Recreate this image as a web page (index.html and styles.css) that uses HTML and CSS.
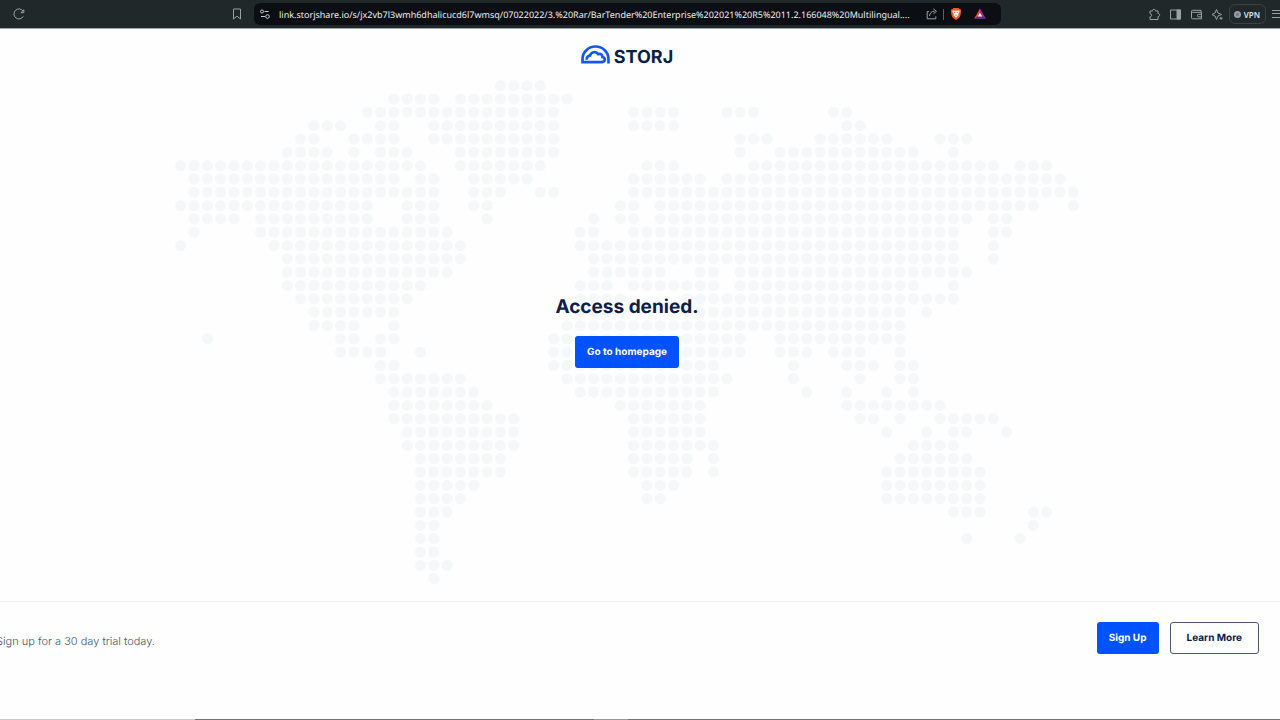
FILE: index.html
```html
<!DOCTYPE html>
<html lang="en">
<head>
<meta charset="utf-8">
<title>Storj - Access denied</title>
<link rel="stylesheet" href="styles.css">
</head>
<body>
<div class="toolbar">
  <div class="tools-left">
    <button class="tool" aria-label="Reload"><svg width="14" height="14" viewBox="0 0 14 14"><path d="M11.3 9.4A5 5 0 1 1 11.2 4.3M11.8 2.8v2.9H8.9z"/></svg></button>
    <button class="tool" aria-label="Bookmark"><svg width="14" height="14" viewBox="0 0 14 14"><path d="M3.5 2h7v10L7 9.2 3.5 12z"/></svg></button>
  </div>
  <div class="address">
    <button class="tool bright" aria-label="Site information"><svg width="12" height="12" viewBox="0 0 12 12"><circle cx="3" cy="3.5" r="1.5"/><circle cx="8.5" cy="8.5" r="1.8"/><path d="M5.5 3.5h4M2 8.5h4"/></svg></button>
    <input class="url" type="text" aria-label="Address" value="link.storjshare.io/s/jx2vb7l3wmh6dhalicucd6l7wmsq/07022022/3.%20Rar/BarTender%20Enterprise%202021%20R5%2011.2.166048%20Multilingual....">
    <button class="tool" aria-label="Share"><svg width="14" height="14" viewBox="0 0 14 14"><path d="M4 4.5H2.2v7.3h8.6V9.3M4.5 9c.3-3 2-4.700 5-4.700M8.300 1.800l3.200 2.500-3.200 2.600"/></svg></button>
    <span class="divider"></span>
    <button class="tool" aria-label="Brave Shields"><svg width="12" height="14" viewBox="0 0 12 14"><path class="shield" d="M3.500 1h5l1 1 1.200.2.500 2-.900 4.500c-.4 1.800-2.100 3-4.300 4.400C3.800 11.700 2.100 10.500 1.700 8.700L.800 4.200l.500-2L2.500 2z"/><path class="face" d="M2.800 3.500l2 .3L6 3.500l1.200.3 2-.3.300 1.500-1.300 2 .2 1.200L6 10.800 3.600 8.200 3.800 7 2.500 5z"/><path class="face-line" d="M3.800 5l1.400.6M8.200 5l-1.400.6M5.200 8L6 8.500 6.800 8"/></svg></button>
    <button class="tool" aria-label="Brave Rewards"><svg width="14" height="12" viewBox="0 0 14 12"><path class="bat-a" d="M7 .5L1 11l6-3.500z"/><path class="bat-b" d="M7 .5L13 11 7 7.500z"/><path class="bat-c" d="M1 11h12L7 7z"/><path class="bat-d" d="M7 4.700L9.200 8.500H4.800z"/></svg></button>
  </div>
  <div class="tools-right">
    <button class="tool" aria-label="Extensions"><svg width="13" height="13" viewBox="0 0 13 13"><path d="M2 3h2.500c-.4-2.200 3.400-2.200 3 0H10v2.600c2.200-.4 2.200 3.300 0 2.900V11.500H2V8.700c2.200.3 2.200-3.200 0-2.900z"/></svg></button>
    <button class="tool" aria-label="Sidebar"><svg width="13" height="13" viewBox="0 0 13 13"><path d="M1.500 2h10v9h-10z"/><path class="solid" d="M8 2h3.500v9H8z"/></svg></button>
    <button class="tool" aria-label="Wallet"><svg width="13" height="13" viewBox="0 0 13 13"><path d="M11 4.500V2.300H2.500a1 1 0 0 0 0 2h9v6.500H2.500a1 1 0 0 1-1-1V3.300M11.500 6.300H8.700a1.200 1.200 0 0 0 0 2.600h2.800"/></svg></button>
    <button class="tool" aria-label="Leo assistant"><svg width="13" height="13" viewBox="0 0 13 13"><path d="M5.500 1.500L7 5l3.500 1.500L7 8l-1.500 3.500L4 8 1 6.500 4 5zM10 8.800v3M8.500 10.300h3"/></svg></button>
    <button class="vpn"><span class="vpn-dot"></span>VPN</button>
    <button class="tool menu" aria-label="Menu"><svg width="12" height="12" viewBox="0 0 12 12"><path d="M0 2.500h12M0 5.500h12M0 9.500h12"/></svg></button>
  </div>
</div>

<header class="header">
  <a class="logo" href="#" aria-label="Storj">
    <svg width="29" height="20" viewBox="0 0 29 20"><path d="M1.500 17.500V14a13 12.500 0 0 1 26 0V18.500M.200 17.200H20.500C24.600 17.200 25 12.800 21.300 12 21.500 9.700 19.500 8.300 17.200 9.200 15.200 5.800 10 6.800 9 10.700 6.700 10.900 5.400 12.800 5.800 14.700"/></svg>
    <span class="wordmark">STORJ</span>
  </a>
</header>

<main class="main">
  <svg class="map" viewBox="-0.5 -0.5 68 38" aria-hidden="true"><path id="map-dots" d=""/></svg>
  <div class="message">
    <h1 class="title">Access denied.</h1>
    <a class="button primary" href="#">Go to homepage</a>
  </div>
</main>

<footer class="footer">
  <p class="trial">Sign up for a 30 day trial today.</p>
  <div class="actions">
    <a class="button primary" href="#">Sign Up</a>
    <a class="button outline" href="#">Learn More</a>
  </div>
</footer>
<div class="bottom-edge"></div>
<script src="map.js"></script>
</body>
</html>
```
FILE: styles.css
```css
* {
  box-sizing: border-box;
}

body {
  margin: 0;
  min-height: 100vh;
  display: flex;
  flex-direction: column;
  overflow-x: hidden;
  background: #fefefe;
  color: #0b2144;
  font-family: Inter, "Liberation Sans", sans-serif;
  text-rendering: geometricPrecision;
}

button {
  font: inherit;
}

.toolbar {
  display: flex;
  height: 29px;
  background: #212829;
  border-bottom: 1px solid #a3a6a7;
  flex-shrink: 0;
}

.tools-left {
  width: 254px;
  padding: 0 10px 0 12px;
  display: flex;
  align-items: center;
  justify-content: space-between;
}

.tool {
  display: flex;
  padding: 0;
  border: 0;
  background: none;
  color: #98a1a3;
  flex-shrink: 0;
}

.tool.bright {
  color: #c5cbd0;
}

.tool svg {
  flex-shrink: 0;
  fill: none;
  stroke: currentColor;
  stroke-width: 1;
}

.tool .solid {
  fill: currentColor;
}

.tool .shield {
  fill: #f1562b;
  stroke: none;
}

.tool .face {
  fill: #fff;
  stroke: none;
}

.tool .face-line {
  stroke: #f1562b;
}

.tool .bat-a {
  fill: #f04a2a;
  stroke: none;
}

.tool .bat-b {
  fill: #a3278f;
  stroke: none;
}

.tool .bat-c {
  fill: #5a2d91;
  stroke: none;
}

.tool .bat-d {
  fill: #fff;
  stroke: none;
}

.address {
  flex: 1;
  min-width: 0;
  height: 22px;
  margin-top: 3px;
  padding: 0 14px 0 5px;
  display: flex;
  align-items: center;
  background: #0b0e13;
  border-radius: 6px;
}

.url {
  flex: 1;
  min-width: 0;
  height: 20px;
  margin: 0 8px;
  padding: 0;
  border: 0;
  background: none;
  color: #eceef2;
  font-family: "Noto Sans", sans-serif;
  font-size: 9px;
  text-rendering: geometricPrecision;
}

.divider {
  width: 1px;
  height: 11px;
  margin: 0 6px 0 4px;
  background: #5b6267;
}

.divider + .tool {
  margin-right: 11px;
}

.tools-right {
  width: 279px;
  display: flex;
  align-items: center;
  justify-content: flex-end;
  gap: 8px;
}

.vpn {
  height: 20px;
  padding: 0 5px 0 4px;
  margin-left: -3px;
  display: flex;
  align-items: center;
  gap: 3px;
  border: 1px solid #3a4244;
  border-radius: 6px;
  background: none;
  color: #dfe3e6;
  font-family: "Noto Sans", sans-serif;
  font-size: 8px;
  font-weight: 600;
}

.vpn-dot {
  width: 7px;
  height: 7px;
  border: 2px solid #9a9ba3;
  border-radius: 50%;
  background: #74757e;
}

.menu {
  width: 8px;
  margin-left: -2px;
  overflow: hidden;
}

.header {
  height: 50px;
  padding: 16px 26px 0 0;
  display: flex;
  justify-content: center;
  flex-shrink: 0;
}

.logo {
  display: flex;
  gap: 4px;
  height: 20px;
  color: #0b2144;
  text-decoration: none;
}

.logo svg {
  fill: none;
  stroke: #1457f0;
  stroke-width: 2.7;
  stroke-linejoin: round;
}

.wordmark {
  font-size: 18px;
  font-weight: 700;
  line-height: 26px;
}

.main {
  flex: 1;
  padding: 0 26px 16px 0;
  display: grid;
  place-items: center;
}

.map,
.message {
  grid-area: 1 / 1;
}

.map {
  width: 100%;
  max-width: 906px;
  fill: none;
  stroke: #f6f7f8;
  stroke-width: 0.84;
  stroke-linecap: round;
  stroke-dasharray: 0 1;
}

.message {
  position: relative;
  padding-bottom: 2px;
  display: flex;
  flex-direction: column;
  align-items: center;
  gap: 17px;
}

.title {
  margin: 0;
  font-size: 19px;
  font-weight: 700;
  line-height: 24px;
}

.button {
  height: 32px;
  padding: 0 12px;
  display: flex;
  align-items: center;
  border-radius: 3px;
  font-size: 10px;
  font-weight: 700;
  text-decoration: none;
}

.primary {
  background: #0052ff;
  color: #fff;
}

.outline {
  padding: 0 16px;
  border: 1px solid #4a5872;
  color: #0b2144;
}

.footer {
  height: 118px;
  padding: 20px 21px 0 0;
  display: flex;
  justify-content: space-between;
  align-items: flex-start;
  border-top: 1px solid #f1f2f3;
  flex-shrink: 0;
}

.trial {
  margin: 0 0 0 -4px;
  padding-top: 11px;
  color: #45566a;
  font-size: 11px;
  font-weight: 300;
  line-height: 16px;
}

.actions {
  display: flex;
  gap: 11px;
}

.bottom-edge {
  height: 1px;
  flex-shrink: 0;
  background: linear-gradient(to right, #c9cacb 0 195px, #727374 195px 594px, #98999a 594px 628px, #727374 628px);
}
```
FILE: map.js
```javascript
// Each line is one row of the dotted world map: column numbers or column ranges.
const rows = `24-27
16-19 21-29
14-28 34-37 41-43 49-50
10-12 15-16 19-28 34-37 50-51
9-10 13-16 19-28 42-44 48-53 57-59
8-11 13 15-17 21-28 42 45-55 58
0-18 21-27 35-37 43-61 63-65
1-16 18-19 22-26 34-39 41-66
1-19 22-24 27-28 34-67
0-14 17-19 22-23 33-34 36-64 67
1-4 6-14 17-19 23 31 33-34 36-59 61-62
1 6-20 30-31 34-58 61-62
0 7-21 30-58 61
8-21 31-58 61
8-20 31-36 39-40 42-59
8-18 30-32 34-40 42-55 58
9-17 30-33 38-58
10-16 30-33 38-54 56
10-13 16 29-54
2 12-13 15-16 28-42 45-54
12-15 18 28-42 45-47 49-51 54
15-16 28-40 46 50-52 54-55
15-21 29-41 46 51 54-55
16-22 30-40 47 50 53 55
16-23 33-39 50-57
16-25 34-39 51-52 54 57-61
17-25 34-39 53 56 58-59 62
17-25 34-40 55-58
18-24 34-38 40 54-59
18-24 34-38 40 53-60
18-22 35-37 53-60
18-21 35-36 53-60
18-20 58-60 64-65
18-19 64
18-19 59 63
18-19
18-20
19`.split("\n");

const path = rows.map((row, y) =>
  row.split(" ").map((range) => {
    const [from, to = from] = range.split("-").map(Number);
    return `M${from} ${y}h${to - from + 0.05}`;
  }).join("")
).join("");

document.getElementById("map-dots").setAttribute("d", path);
```
